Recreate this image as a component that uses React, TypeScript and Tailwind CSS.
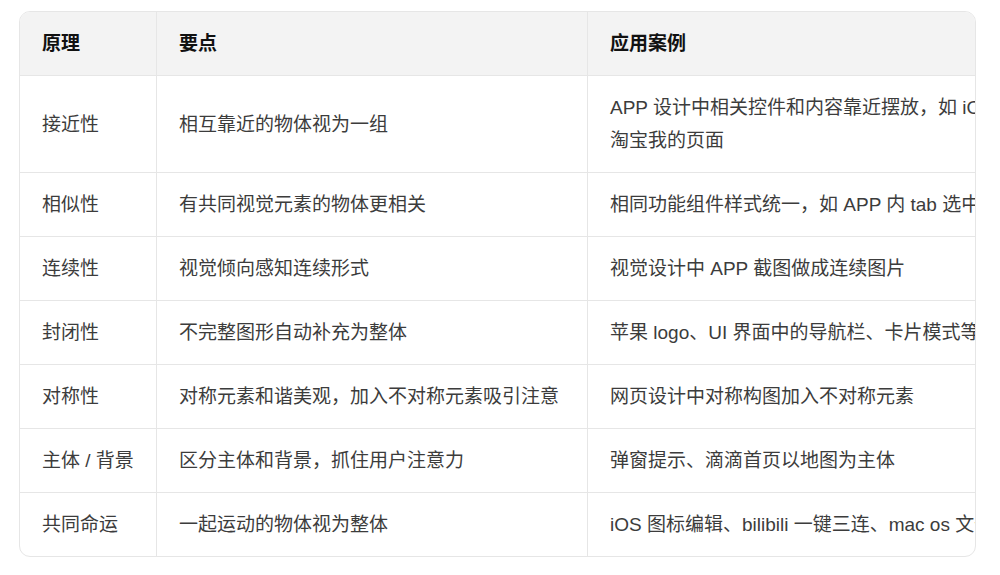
import React from "react";

const rows: [string, string, React.ReactNode][] = [
  [
    "接近性",
    "相互靠近的物体视为一组",
    <>
      APP 设计中相关控件和内容靠近摆放，如 iOS 设置、
      <br />
      淘宝我的页面
    </>,
  ],
  ["相似性", "有共同视觉元素的物体更相关", "相同功能组件样式统一，如 APP 内 tab 选中状态"],
  ["连续性", "视觉倾向感知连续形式", "视觉设计中 APP 截图做成连续图片"],
  ["封闭性", "不完整图形自动补充为整体", "苹果 logo、UI 界面中的导航栏、卡片模式等"],
  ["对称性", "对称元素和谐美观，加入不对称元素吸引注意", "网页设计中对称构图加入不对称元素"],
  ["主体 / 背景", "区分主体和背景，抓住用户注意力", "弹窗提示、滴滴首页以地图为主体"],
  ["共同命运", "一起运动的物体视为整体", "iOS 图标编辑、bilibili 一键三连、mac os 文件拖动"],
];

export default function App() {
  return (
    <div
      className="w-[1000px] h-[575px] bg-white pl-[19px] pt-[11px]"
      style={{ fontFamily: '"Liberation Sans", "Noto Sans CJK SC", sans-serif' }}
    >
      <div className="w-[957px] border border-[#e6e6e6] rounded-[11px] overflow-hidden">
        <div className="grid grid-cols-[137px_431px_640px] w-max text-[19px] leading-[33px]">
          {/* header */}
          <div className="bg-[#f3f3f3] px-[22px] py-[15px] font-bold text-[#111] border-r border-b border-[#e6e6e6]">原理</div>
          <div className="bg-[#f3f3f3] px-[22px] py-[15px] font-bold text-[#111] border-r border-b border-[#e6e6e6]">要点</div>
          <div className="bg-[#f3f3f3] px-[22px] py-[15px] font-bold text-[#111] border-b border-[#e6e6e6]">应用案例</div>

          {rows.map(([a, b, c], i) => {
            const last = i === rows.length - 1;
            const bb = last ? "" : "border-b";
            return (
              <React.Fragment key={i}>
                <div className={`flex items-center px-[22px] py-[15px] text-[#3c3c3c] border-r border-[#e6e6e6] ${bb}`}>{a}</div>
                <div className={`flex items-center px-[22px] py-[15px] text-[#3c3c3c] border-r border-[#e6e6e6] ${bb}`}>{b}</div>
                <div className={`px-[22px] py-[15px] text-[#3c3c3c] whitespace-nowrap border-[#e6e6e6] ${bb}`}>{c}</div>
              </React.Fragment>
            );
          })}
        </div>
      </div>
    </div>
  );
}
